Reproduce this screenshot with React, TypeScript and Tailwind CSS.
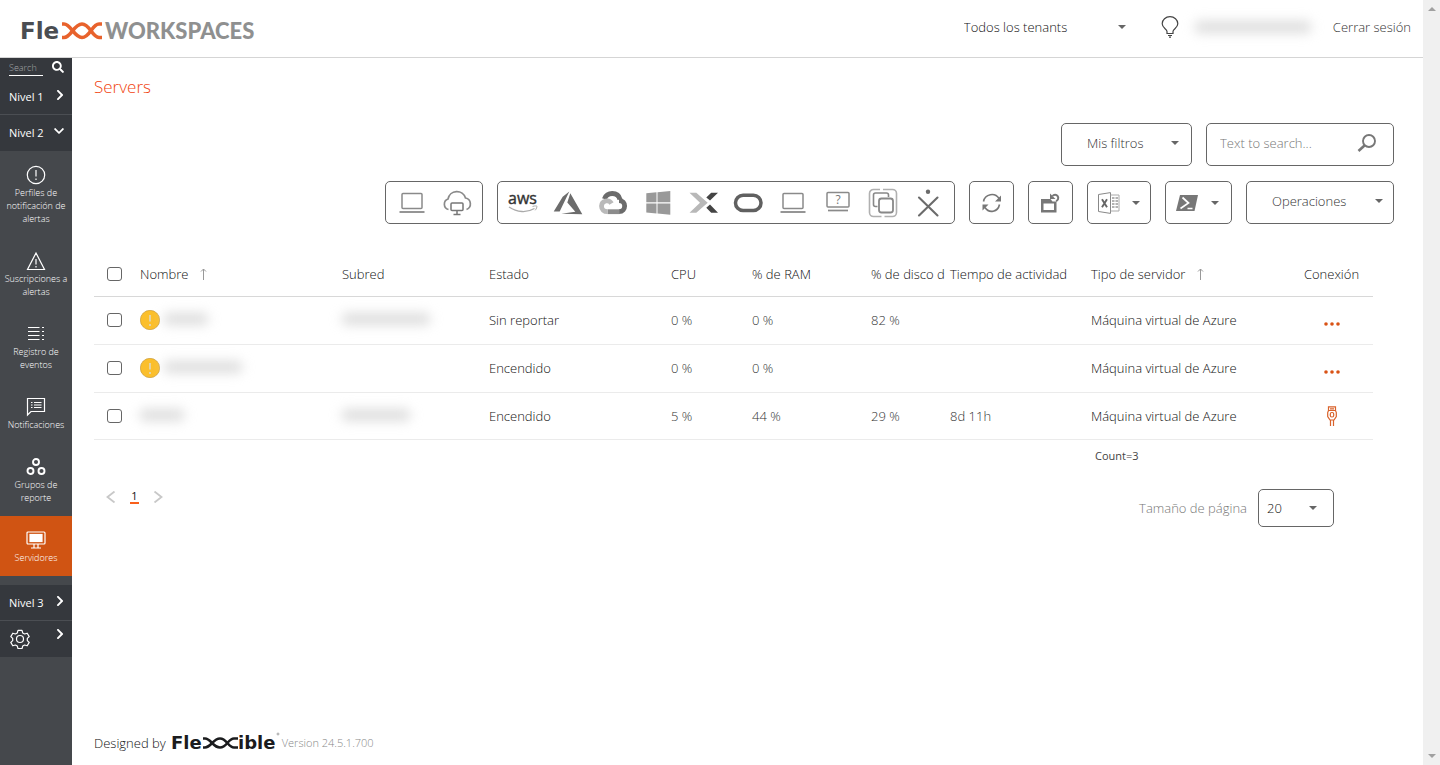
import React, { useState } from 'react';
import { FaChevronDown, FaChevronRight, FaSearch } from 'react-icons/fa';

const Caret = ({ className = '' }: { className?: string }) => (
  <svg className={`w-2 h-1 shrink-0 ${className}`} viewBox="0 0 8 4" fill="#666" aria-hidden="true">
    <path d="M0 0h8L4 4z" />
  </svg>
);

const Glyph = ({ children }: { children: React.ReactNode }) => (
  <svg className="w-[30px] h-[30px]" viewBox="0 0 30 30" fill="none" aria-hidden="true">
    {children}
  </svg>
);

/* Logos */

const WorkspacesLogo = () => (
  <svg className="w-[236px] h-[32px] overflow-visible" viewBox="0 0 236 32" role="img" aria-label="Flexx Workspaces">
    <text x="-1" y="26" fontFamily="'DejaVu Sans', sans-serif" fontSize="23" fontWeight="700" fill="#4a4d52">Fle</text>
    <g fill="none" stroke="#e8622c" strokeWidth="3.600">
      <path d="M41 11h2c7 0 10 13.500 18 13.500s10-13.500 17-13.500h3" />
      <path d="M41 24.500h2c7 0 10-13.500 18-13.500s10 13.500 17 13.500h3" />
    </g>
    <text x="84" y="26" fontFamily="Lato, sans-serif" fontSize="22" fontWeight="900" fill="#8f9090">WORKSPACES</text>
  </svg>
);

const FlexxibleLogo = () => (
  <svg className="w-[108px] h-[24px] overflow-visible" viewBox="0 0 108 24" role="img" aria-label="Flexxible">
    <text x="-1" y="18" fontFamily="'DejaVu Sans', sans-serif" fontSize="18" fontWeight="700" fill="#1b1c1e">Fle</text>
    <g fill="none" stroke="#1b1c1e" strokeWidth="2.600">
      <path d="M31 7.500h2c6 0 8 9 15 9s8-9 14-9h4" />
      <path d="M31 16.500h2c6 0 8-9 15-9s8 9 14 9h4" />
    </g>
    <text x="66" y="18" fontFamily="'DejaVu Sans', sans-serif" fontSize="18" fontWeight="700" fill="#1b1c1e">ible</text>
    <circle cx="106" cy="3" r="1" fill="none" stroke="#888" strokeWidth="0.700" />
  </svg>
);

/* Toolbar icons */

const LaptopIcon = () => (
  <Glyph>
    <rect x="5" y="5.500" width="20" height="15" rx="1" stroke="#8a8a8a" strokeWidth="1.500" />
    <path d="M2.500 24h25" stroke="#8a8a8a" strokeWidth="1.800" />
  </Glyph>
);

const CloudDesktopIcon = () => (
  <Glyph>
    <path d="M6.500 21.500a5.500 5.500 0 0 1-.5-10.500a9 9 0 0 1 17.500-1a6 6 0 0 1 1 11.500" stroke="#8a8a8a" strokeWidth="1.700" />
    <rect x="9" y="15" width="12" height="7.500" rx="1" stroke="#777" strokeWidth="1.500" />
    <path d="M15 22.500v4M11.500 26.500h7" stroke="#777" strokeWidth="1.500" />
  </Glyph>
);

const AwsIcon = () => (
  <Glyph>
    <text x="14.500" y="16" textAnchor="middle" fontFamily="'Open Sans', sans-serif" fontSize="16" fontWeight="400" fill="#333" stroke="#333" strokeWidth="0.400">aws</text>
    <path d="M1 19c8 5.500 18 6 25.500 1.500" stroke="#aaa" strokeWidth="1.300" />
    <path d="M24.500 18.500c2-.8 4.500-.6 4.500-.2s-.5 2.700-1.800 4" stroke="#aaa" strokeWidth="1" />
  </Glyph>
);

const AzureIcon = () => (
  <Glyph>
    <path d="M.7 23.500h6l9.600-20-6.600 5.300zM17.300 5.200l12 21-21-.4 14-2-8-9.300z" fill="#6c6c6c" />
  </Glyph>
);

const GoogleCloudIcon = () => (
  <Glyph>
    <path d="M6.500 11C8.500 3.800 20 3.500 22 11.500" stroke="#6b6b6b" strokeWidth="5" />
    <path d="M21 12.500c7.500 0 7.500 11 0 11.200" stroke="#6b6b6b" strokeWidth="4.800" />
    <path d="M9.500 23.700H21.500" stroke="#8c8c8c" strokeWidth="4.800" />
    <path d="M13.500 15.500c-2.500-4.500-9.800-3-10 2.500c0 3.500 2.500 5.700 6 5.700" stroke="#b9b9b9" strokeWidth="4.800" />
  </Glyph>
);

const WindowsIcon = () => (
  <Glyph>
    <path d="M3.300 5.300l10.200-1v10H3.300zM14.500 4.200l12.800-1.200v11.300H14.500zM3.300 15.500h10.200v10L3.300 24.500zM14.500 15.500h12.800v11.300l-12.800-1.200z" fill="#999" />
  </Glyph>
);

const CitrixIcon = () => (
  <Glyph>
    <path d="M1.500 4.800h6.800l11.400 10-11.400 10H1.500L12 14.800z" fill="#b8b8b8" />
    <path d="M23.200 4.800H30l-8 7.700-3.700-3.100zM18.300 19.800l3.700-3.200 8 8.200h-6.800z" fill="#444" />
  </Glyph>
);

const OracleIcon = () => (
  <Glyph>
    <rect x="2.500" y="7.200" width="25.500" height="15.300" rx="7.600" stroke="#606060" strokeWidth="3.500" />
  </Glyph>
);

const UnknownDesktopIcon = () => (
  <Glyph>
    <rect x="4" y="4.500" width="22" height="14.500" rx="1" stroke="#8a8a8a" strokeWidth="1.500" />
    <text x="15" y="16" textAnchor="middle" fontFamily="'Open Sans', sans-serif" fontSize="12" fontWeight="400" fill="#777">?</text>
    <path d="M5 22.500h20" stroke="#8a8a8a" strokeWidth="1.700" />
  </Glyph>
);

const StackIcon = () => (
  <Glyph>
    <path d="M12 1.500H5.500a4 4 0 0 0-4 4v19a4 4 0 0 0 4 4H13.500M16.500 28.500h8a4 4 0 0 0 4-4v-19a4 4 0 0 0-4-4H15" stroke="#b0b0b0" strokeWidth="1.600" />
    <path d="M9.500 18.500H7.500a2 2 0 0 1-2-2v-9.500a2 2 0 0 1 2-2h11a2 2 0 0 1 2 2v2" stroke="#888" strokeWidth="1.600" />
    <rect x="11" y="10.500" width="14" height="14" rx="2.500" stroke="#888" strokeWidth="1.800" />
  </Glyph>
);

const FigureIcon = () => (
  <Glyph>
    <circle cx="15" cy="3.800" r="2.200" fill="#6b6b6b" />
    <path d="M6 9.500L24.500 27.500M24.500 9.500L6 27.500" stroke="#6b6b6b" strokeWidth="2.100" strokeLinecap="round" />
  </Glyph>
);

const RefreshIcon = () => (
  <svg className="w-5 h-5" viewBox="0 0 20 20" fill="none" aria-hidden="true">
    <path d="M1.500 8.500C3 .8 13-.8 17 5.500M17.500 11.500C16 19 7 20.800 3 14.500" stroke="#777" strokeWidth="1.600" />
    <path d="M19 2.500V8.500h-6zM.5 17.500v-6h6z" fill="#777" />
  </svg>
);

const ResetViewIcon = () => (
  <svg className="w-5 h-5" viewBox="0 0 20 20" fill="none" aria-hidden="true">
    <path d="M0 6h9.500l2 2.500h4V19.500H0zM2.500 10.500v6.500H13v-6.500z" fill="#777" fillRule="evenodd" />
    <path d="M11.500 3a3.200 3.200 0 1 1 3.500 5" stroke="#777" strokeWidth="2" />
    <path d="M9 .5v5.500h5.500z" fill="#777" />
  </svg>
);

const ExcelIcon = () => (
  <svg className="w-[22px] h-[22px]" viewBox="0 0 22 22" fill="none" aria-hidden="true">
    <path d="M.5 2.500L12.500.6v20.800L.5 19.500z" stroke="#888" />
    <path d="M12.500 3h8.500v16h-8.500" stroke="#aaa" />
    <path d="M14 6h2.500M14 9h2.500M14 12h2.500M14 15h2.500M17.500 6H20M17.500 9H20M17.500 12H20M17.500 15H20" stroke="#999" strokeWidth="1.300" />
    <path d="M4 7.200l5 8M9 7.200l-5 8" stroke="#666" strokeWidth="1.900" />
  </svg>
);

const PowerShellIcon = () => (
  <svg className="w-[22px] h-4" viewBox="0 0 22 16" fill="none" aria-hidden="true">
    <path d="M4 0h18l-3.500 16H0z" fill="#777" />
    <path d="M6.500 2.500l6 5.500-8 5.500M11.500 13.500h5" stroke="#fff" strokeWidth="1.700" />
  </svg>
);

const SortArrow = () => (
  <svg className="w-[7px] h-3 shrink-0" viewBox="0 0 7 12" fill="none" stroke="#999" aria-hidden="true">
    <path d="M3.500 12V1M1 3.500L3.500 1 6 3.500" />
  </svg>
);

const WarningBadge = () => (
  <svg className="w-5 h-5 shrink-0" viewBox="0 0 20 20" role="img" aria-label="Aviso">
    <circle cx="10" cy="10" r="9.700" fill="#fbbf2c" stroke="#c0912f" strokeWidth="0.600" />
    <path d="M10 5v6.500M10 14v2" stroke="#e3d3a6" strokeWidth="2" />
  </svg>
);

const PlugIcon = () => (
  <svg className="w-[10px] h-5" viewBox="0 0 10 20" fill="none" stroke="#d9622b" strokeWidth="1.200" aria-hidden="true">
    <path d="M1.500 4.500V.8h7v3.700M1.500 4.500L.7 6.500v4l2.300 3.500h4l2.300-3.500v-4l-.8-2zM3.500 14v6M6.500 14v6M3 2.800h4" />
    <rect x="3.300" y="6.500" width="3.400" height="4.500" rx="1.500" />
  </svg>
);

const DotsIcon = () => (
  <svg className="w-4 h-1 mt-2" viewBox="0 0 16 4" fill="#d95316" aria-hidden="true">
    <circle cx="2" cy="2" r="1.800" />
    <circle cx="8" cy="2" r="1.800" />
    <circle cx="14" cy="2" r="1.800" />
  </svg>
);

/* Sidebar icons, 20x20, stroked with the current colour */

const NavIcon = ({ children }: { children: React.ReactNode }) => (
  <svg className="w-5 h-5" viewBox="0 0 20 20" fill="none" stroke="currentColor" strokeWidth="1.200" aria-hidden="true">
    {children}
  </svg>
);

const navItems = [
  {
    label: 'Perfiles de notificación de alertas',
    icon: <NavIcon><circle cx="10" cy="10" r="8.700" /><path d="M10 5v6.500M10 13.500v1.500" /></NavIcon>,
  },
  {
    label: 'Suscripciones a alertas',
    icon: <NavIcon><path d="M10 2L1.500 18.500h17z" /><path d="M10 8v5.500M10 15v1.500" /></NavIcon>,
  },
  {
    label: 'Registro de eventos',
    icon: <NavIcon><path d="M2 3.500h11.500M2 7.500h11.500M2 11.500h11.500M2 15.500h11.500M16 3.500h2M16 7.500h2M16 11.500h2M16 15.500h2" /></NavIcon>,
  },
  {
    label: 'Notificaciones',
    icon: <NavIcon><path d="M1.500 18v-16.500h17v13H5z" /><path d="M5 5.500h1.500M5 8h1.500M5 10.500h1.500M8 5.500h7.500M8 8h7.500M8 10.500h7.500" /></NavIcon>,
  },
  {
    label: 'Grupos de reporte',
    icon: (
      <NavIcon>
        <g strokeWidth="1.900">
          <circle cx="10" cy="5" r="3" />
          <circle cx="4.500" cy="14" r="3" />
          <circle cx="15.500" cy="14" r="3" />
        </g>
      </NavIcon>
    ),
  },
  {
    label: 'Servidores',
    active: true,
    icon: <NavIcon><rect x="1" y="2" width="18" height="12" rx="1" /><rect x="4" y="4.500" width="12" height="7" fill="currentColor" /><path d="M8 14v3.500M12 14v3.500M5 18h10" /></NavIcon>,
  },
];

const providers = [
  { name: 'AWS', icon: <AwsIcon /> },
  { name: 'Azure', icon: <AzureIcon /> },
  { name: 'Google Cloud', icon: <GoogleCloudIcon /> },
  { name: 'Windows', icon: <WindowsIcon /> },
  { name: 'Citrix', icon: <CitrixIcon /> },
  { name: 'Oracle', icon: <OracleIcon /> },
  { name: 'Físico', icon: <LaptopIcon /> },
  { name: 'Desconocido', icon: <UnknownDesktopIcon /> },
  { name: 'Nutanix', icon: <StackIcon /> },
  { name: 'Otros', icon: <FigureIcon /> },
];

interface Server {
  id: number;
  warning: boolean;
  nameMask: string;
  subnetMask: string;
  estado: string;
  cpu: string;
  ram: string;
  disco: string;
  actividad: string;
  tipo: string;
  connected: boolean;
}

const servers: Server[] = [
  { id: 1, warning: true, nameMask: 'w-[44px]', subnetMask: 'w-[88px]', estado: 'Sin reportar', cpu: '0 %', ram: '0 %', disco: '82 %', actividad: '', tipo: 'Máquina virtual de Azure', connected: false },
  { id: 2, warning: true, nameMask: 'w-[78px]', subnetMask: '', estado: 'Encendido', cpu: '0 %', ram: '0 %', disco: '', actividad: '', tipo: 'Máquina virtual de Azure', connected: false },
  { id: 3, warning: false, nameMask: 'w-[44px]', subnetMask: 'w-[68px]', estado: 'Encendido', cpu: '5 %', ram: '44 %', disco: '29 %', actividad: '8d 11h', tipo: 'Máquina virtual de Azure', connected: true },
];

const Masked = ({ width }: { width: string }) => (
  <span className={`block h-3 mb-0.5 rounded bg-neutral-300/80 blur-[6px] ${width}`} aria-hidden="true" />
);

const checkboxClass =
  'block w-[15px] h-[14px] appearance-none rounded-[3px] border border-[#666] bg-white checked:bg-[#d05413]';

const boxClass = 'h-[43px] flex items-center rounded-[5px] border border-[#666] bg-white';

const Sidebar = () => (
  <nav className="w-[72px] shrink-0 bg-[#45484c] text-white">
    <div className="h-5 bg-[#35383d] flex items-start justify-between pl-[9px] pr-2">
      <input
        type="text"
        placeholder="Search"
        aria-label="Search"
        className="w-[34px] h-[18px] border-b border-white bg-transparent pt-0.5 text-[9px] font-light placeholder:text-[#a6a8ab] focus:outline-none"
      />
      <button type="button" aria-label="Buscar" className="pt-[3px]">
        <FaSearch className="w-3 h-3" />
      </button>
    </div>
    <button type="button" className="w-full h-[37px] flex items-center justify-between pt-0.5 pl-[9px] pr-2 bg-[#35383d] border-b border-[#4b4e53] text-[11px] font-normal">
      Nivel 1
      <FaChevronRight className="w-2 h-3 mb-1" />
    </button>
    <button type="button" className="w-full h-9 flex items-center justify-between pl-[9px] pr-2 bg-[#35383d] text-[11px] font-normal">
      Nivel 2
      <FaChevronDown className="w-[10px] h-3 mb-1" />
    </button>
    <ul className="mb-[9px]">
      {navItems.map((item) => (
        <li key={item.label}>
          <a
            href="#"
            className={`flex flex-col items-center gap-px pt-[14px] pb-3 text-center text-[9px] leading-[13px] ${item.active ? 'bg-[#d05413]' : ''}`}
          >
            {item.icon}
            <span>{item.label}</span>
          </a>
        </li>
      ))}
    </ul>
    <button type="button" className="w-full h-9 flex items-center justify-between pl-[9px] pr-2 bg-[#35383d] border-b border-[#4b4e53] text-[11px] font-normal">
      Nivel 3
      <FaChevronRight className="w-2 h-3 mb-1" />
    </button>
    <button type="button" aria-label="Configuración" className="w-full h-9 flex items-center justify-between pl-[10px] pr-2 bg-[#35383d]">
      <NavIcon>
        <circle cx="10" cy="10" r="3.500" />
        <path d="M8 1.300h4l.7 2.600 1.900 1.100 2.600-.8 2 3.400-1.900 1.800v2.200l1.900 1.800-2 3.400-2.600-.8-1.900 1.100-.7 2.600H8l-.7-2.600-1.900-1.100-2.600.8-2-3.400 1.900-1.800V9.400L.8 7.600l2-3.400 2.600.8 1.900-1.100z" strokeLinejoin="round" />
      </NavIcon>
      <FaChevronRight className="w-2 h-3 mb-[10px]" />
    </button>
  </nav>
);

const Header = () => (
  <header className="h-[58px] flex items-center justify-between border-b border-[#d5d5d5] bg-white pl-[21px] pr-3">
    <a href="#" className="block"><WorkspacesLogo /></a>
    <div className="flex items-center pb-1">
      <div className="relative flex items-center">
        <select aria-label="Tenant" className="w-[162px] appearance-none bg-transparent focus:outline-none">
          <option>Todos los tenants</option>
        </select>
        <Caret className="absolute right-0 pointer-events-none" />
      </div>
      <button type="button" aria-label="Ayuda" className="ml-[35px]">
        <svg className="w-[18px] h-[22px]" viewBox="0 0 18 22" fill="none" stroke="#444" strokeWidth="1.200" aria-hidden="true">
          <path d="M6 17.500v-2C6 13 1.200 12 1.200 7.700C1.200 3.700 4.700.7 9 .7s7.800 3 7.800 7c0 4.300-4.800 5.300-4.800 7.800v2zM7 19.500h4M8 21.200h2" />
        </svg>
      </button>
      <span className="block w-[116px] h-3 ml-4 mr-[22px] rounded bg-neutral-300/80 blur-[6px]" aria-hidden="true" />
      <a href="#" className="text-[#333]">Cerrar sesión</a>
    </div>
  </header>
);

const Toolbar = () => (
  <div className="mt-6 pr-[29px] flex flex-col items-end gap-[15px]">
    <div className="flex gap-[14px]">
      <button type="button" className={`${boxClass} w-[131px] justify-between pl-[25px] pr-3 pb-1 text-[#333]`}>
        Mis filtros
        <Caret />
      </button>
      <div className={`${boxClass} w-[188px] pl-[13px] pr-4 pb-1`}>
        <input
          type="text"
          placeholder="Text to search..."
          aria-label="Text to search"
          className="min-w-0 flex-1 bg-transparent placeholder:text-[#777] focus:outline-none"
        />
        <button type="button" aria-label="Buscar">
          <svg className="w-5 h-5" viewBox="0 0 20 20" fill="none" stroke="#777" aria-hidden="true">
            <circle cx="12" cy="8" r="6" strokeWidth="1.900" />
            <path d="M7.500 12.500L1.500 18" strokeWidth="2.600" />
          </svg>
        </button>
      </div>
    </div>
    <div className="flex gap-[14px] text-[#333]">
      <div className={`${boxClass} px-[3px]`}>
        <button type="button" aria-label="Equipos" className="w-[45px] flex justify-center"><LaptopIcon /></button>
        <button type="button" aria-label="Nube" className="w-[45px] flex justify-center"><CloudDesktopIcon /></button>
      </div>
      <div className={`${boxClass} pl-0.5 pr-1`}>
        {providers.map((provider) => (
          <button key={provider.name} type="button" aria-label={provider.name} className="w-[45px] flex justify-center">
            {provider.icon}
          </button>
        ))}
      </div>
      <button type="button" aria-label="Refrescar" className={`${boxClass} w-[45px] justify-center`}><RefreshIcon /></button>
      <button type="button" aria-label="Restablecer vista" className={`${boxClass} w-[45px] justify-center`}><ResetViewIcon /></button>
      <button type="button" aria-label="Exportar" className={`${boxClass} w-16 justify-between px-[10px]`}>
        <ExcelIcon />
        <Caret />
      </button>
      <button type="button" aria-label="PowerShell" className={`${boxClass} w-[67px] justify-between pl-[10px] pr-3`}>
        <PowerShellIcon />
        <Caret />
      </button>
      <button type="button" className={`${boxClass} w-[148px] justify-between pl-[25px] pr-[10px] pb-1`}>
        Operaciones
        <Caret />
      </button>
    </div>
  </div>
);

const App: React.FC = () => {
  const [selected, setSelected] = useState<number[]>([]);
  const [pageSize, setPageSize] = useState('20');

  const toggle = (id: number) =>
    setSelected((prev) => (prev.includes(id) ? prev.filter((s) => s !== id) : [...prev, id]));

  const toggleAll = () =>
    setSelected((prev) => (prev.length === servers.length ? [] : servers.map((s) => s.id)));

  return (
    <div className="flex min-h-screen bg-white font-['Open_Sans',sans-serif] font-light text-[13px] leading-5 text-[#111]">
      <div className="min-w-0 flex-1 flex flex-col">
        <Header />
        <div className="flex-1 flex">
          <Sidebar />
          <main className="min-w-0 flex-1 flex flex-col pl-[22px] pt-[17px]">
            <h1 className="text-[17px] leading-6 text-[#f1420c]">Servers</h1>
            <Toolbar />

            <div className="mt-7 pr-[50px]">
              <table className="w-full table-fixed border-collapse text-left whitespace-nowrap">
                <colgroup>
                  <col className="w-[42px]" />
                  <col />
                  <col className="w-[147px]" />
                  <col className="w-[182px]" />
                  <col className="w-[81px]" />
                  <col className="w-[119px]" />
                  <col className="w-[79px]" />
                  <col className="w-[141px]" />
                  <col className="w-[203px]" />
                  <col className="w-[83px]" />
                </colgroup>
                <thead>
                  <tr className="h-11 border-b border-[#d8d8d8] [&>th]:font-light [&>th]:pl-1">
                    <th>
                      <input
                        type="checkbox"
                        aria-label="Seleccionar todo"
                        checked={selected.length === servers.length}
                        onChange={toggleAll}
                        className={`${checkboxClass} ml-[9px]`}
                      />
                    </th>
                    <th><span className="flex items-center gap-3">Nombre<SortArrow /></span></th>
                    <th>Subred</th>
                    <th>Estado</th>
                    <th>CPU</th>
                    <th>% de RAM</th>
                    <th>% de disco d</th>
                    <th>Tiempo de actividad</th>
                    <th><span className="flex items-center gap-3">Tipo de servidor<SortArrow /></span></th>
                    <th className="pr-1 text-center">Conexión</th>
                  </tr>
                </thead>
                <tbody>
                  {servers.map((server) => (
                    <tr key={server.id} className="h-12 last:h-[47px] border-b border-[#ebebeb] [&>td]:pl-1">
                      <td>
                        <input
                          type="checkbox"
                          aria-label={`Seleccionar servidor ${server.id}`}
                          checked={selected.includes(server.id)}
                          onChange={() => toggle(server.id)}
                          className={`${checkboxClass} ml-[9px]`}
                        />
                      </td>
                      <td>
                        <span className="flex items-center gap-1">
                          {server.warning && <WarningBadge />}
                          <Masked width={server.nameMask} />
                        </span>
                      </td>
                      <td>{server.subnetMask && <Masked width={server.subnetMask} />}</td>
                      <td>{server.estado}</td>
                      <td className="text-[#333]">{server.cpu}</td>
                      <td className="text-[#333]">{server.ram}</td>
                      <td className="text-[#333]">{server.disco}</td>
                      <td className="text-[#333]">{server.actividad}</td>
                      <td>{server.tipo}</td>
                      <td className="pr-1">
                        <button type="button" aria-label="Conexión" className="flex w-full justify-center">
                          {server.connected ? <PlugIcon /> : <DotsIcon />}
                        </button>
                      </td>
                    </tr>
                  ))}
                </tbody>
                <tfoot>
                  <tr className="h-[34px] text-[11px] font-normal text-[#444]">
                    <td colSpan={8} />
                    <td className="pl-2">Count=3</td>
                    <td />
                  </tr>
                </tfoot>
              </table>
            </div>

            <div className="mt-4 pl-3 pr-[89px] flex items-start justify-between">
              <div className="flex items-center gap-[14px]">
                <button type="button" aria-label="Página anterior">
                  <svg className="w-[10px] h-3" viewBox="0 0 10 12" fill="none" stroke="#c8c8c8" strokeWidth="1.800" aria-hidden="true"><path d="M8.500.5L1.500 6l7 5.500" /></svg>
                </button>
                <button type="button" className="w-[9px] text-[11px] font-normal leading-[13px] border-b-2 border-[#f9601c]">1</button>
                <button type="button" aria-label="Página siguiente">
                  <svg className="w-[10px] h-3" viewBox="0 0 10 12" fill="none" stroke="#c8c8c8" strokeWidth="1.800" aria-hidden="true"><path d="M1.500.5l7 5.500-7 5.500" /></svg>
                </button>
              </div>
              <div className="flex items-center gap-[11px]">
                <label htmlFor="page-size" className="text-[#777]">Tamaño de página</label>
                <div className="relative flex items-center">
                  <select
                    id="page-size"
                    value={pageSize}
                    onChange={(e) => setPageSize(e.target.value)}
                    className="w-[76px] h-[38px] appearance-none rounded-[5px] border border-[#666] bg-white pl-2 focus:outline-none"
                  >
                    <option>10</option>
                    <option>20</option>
                    <option>50</option>
                  </select>
                  <Caret className="absolute right-[17px] pointer-events-none" />
                </div>
              </div>
            </div>

            <footer className="mt-auto pb-[10px] flex items-center gap-[6px]">
              <span>Designed by</span>
              <span className="flex items-center gap-[2px]">
                <FlexxibleLogo />
                <span className="text-[11px] text-[#888]">Version 24.5.1.700</span>
              </span>
            </footer>
          </main>
        </div>
      </div>

      <div className="w-[17px] shrink-0 flex flex-col items-center justify-between bg-[#f0f0f0] py-[7px]" aria-hidden="true">
        <svg className="w-2 h-1" viewBox="0 0 8 4" fill="#a0a0a0"><path d="M0 4h8L4 0z" /></svg>
        <svg className="w-2 h-1" viewBox="0 0 8 4" fill="#a0a0a0"><path d="M0 0h8L4 4z" /></svg>
      </div>
    </div>
  );
};

export default App;
